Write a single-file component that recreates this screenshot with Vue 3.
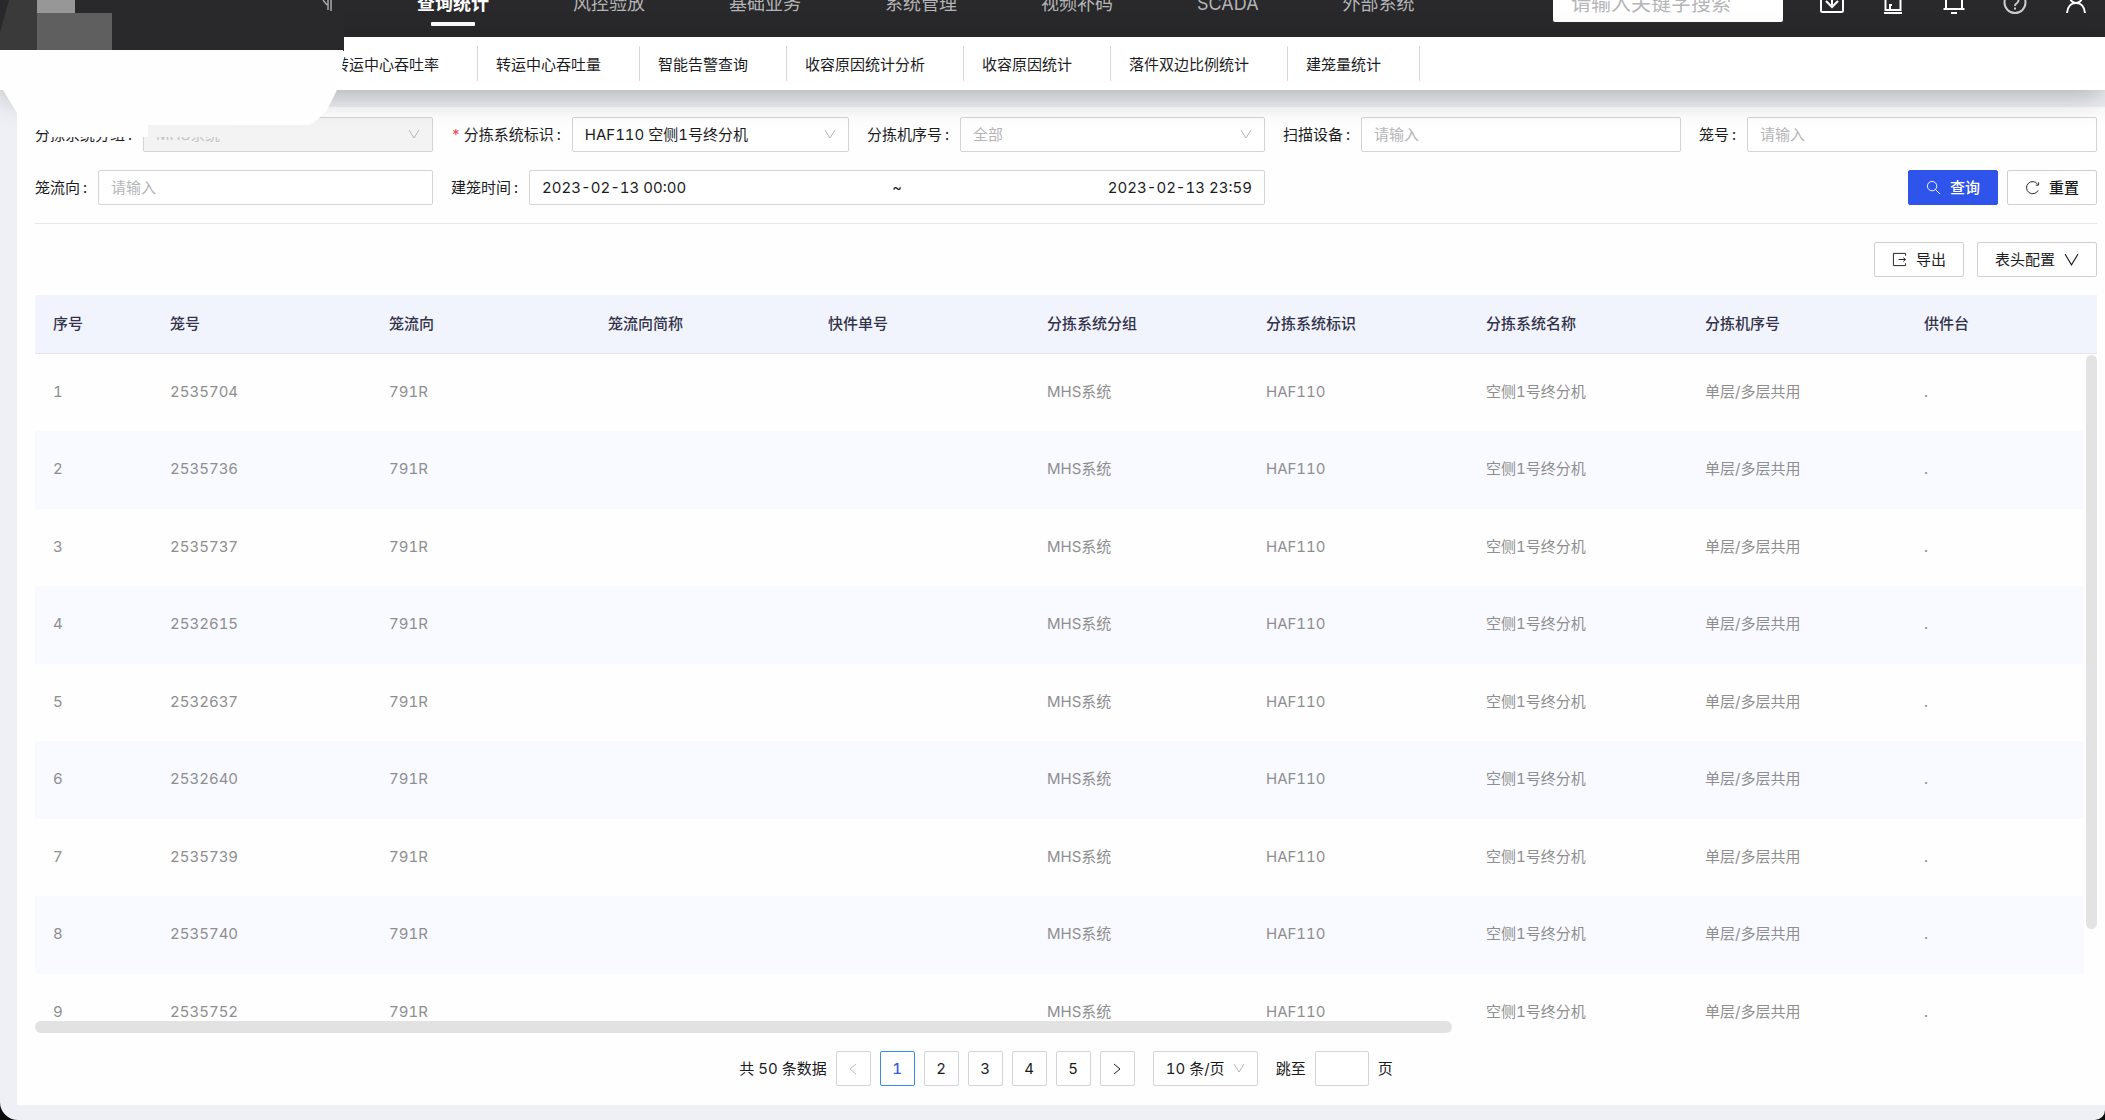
<script setup>
import { ref } from 'vue'

const mainNav = ['查询统计', '风控验放', '基础业务', '系统管理', '视频补码', 'SCADA', '外部系统']
const subNav = ['转运中心吞吐率', '转运中心吞吐量', '智能告警查询', '收容原因统计分析', '收容原因统计', '落件双边比例统计', '建笼量统计']
const columns = ['序号', '笼号', '笼流向', '笼流向简称', '快件单号', '分拣系统分组', '分拣系统标识', '分拣系统名称', '分拣机序号', '供件台']
const cages = ['2535704', '2535736', '2535737', '2532615', '2532637', '2532640', '2535739', '2535740', '2535752']
const rows = cages.map((no, i) => [i + 1, no, '791R', '', '', 'MHS系统', 'HAF110', '空侧1号终分机', '单层/多层共用', '.'])

const current = ref(1)
const startTime = ref('2023-02-13 00:00')
const endTime = ref('2023-02-13 23:59')
</script>

<template>
  <div class="layout">
    <header class="topbar">
      <nav class="main-nav">
        <a v-for="(item, i) in mainNav" :key="item" href="#" :class="{ active: i === 0 }">{{ item }}</a>
      </nav>
      <div class="tools">
        <input class="search" type="search" placeholder="请输入关键字搜索" aria-label="搜索" />
        <button type="button" class="tool" aria-label="下载">
          <svg viewBox="0 0 24 24"><rect x="1" y="0" width="22" height="20" rx="1.5" /><path d="M12 2v11M6 9l6 6 6-6" /></svg>
        </button>
        <button type="button" class="tool" aria-label="告警">
          <svg viewBox="0 0 24 24"><path d="M4.500 18V9a7.500 7.500 0 0 1 15 0v9zM9 18v-5h2M3 21h18" /></svg>
        </button>
        <button type="button" class="tool" aria-label="通知">
          <svg viewBox="0 0 24 24"><path d="M4 17V9a8 8 0 0 1 16 0v8M1.500 17h21M9 21h6" /></svg>
        </button>
        <button type="button" class="tool dim" aria-label="帮助">
          <svg viewBox="0 0 24 24"><circle cx="12" cy="10.500" r="10.500" /><path d="M8.500 8a3.500 3.500 0 1 1 5.500 3c-1.300.9-2 1.500-2 3M12 15.500v2" /></svg>
        </button>
        <button type="button" class="tool" aria-label="用户">
          <svg viewBox="0 0 24 24"><circle cx="12" cy="5" r="6" /><path d="M3 21c.5-6 4-10 9-10s8.500 4 9 10" /></svg>
        </button>
      </div>
    </header>

    <nav class="sub-nav">
      <a v-for="item in subNav" :key="item" href="#"><span>{{ item }}</span></a>
    </nav>

    <main class="panel">
      <form class="filters" @submit.prevent>
        <div class="field">
          <label for="group">分拣系统分组</label>
          <div class="select">
            <select id="group" disabled><option>MHS系统</option></select>
            <svg viewBox="0 0 12 12"><path d="M1 2l5 8 5-8" /></svg>
          </div>
        </div>
        <div class="field">
          <label for="sys" class="required">分拣系统标识</label>
          <div class="select">
            <select id="sys"><option>HAF110 空侧1号终分机</option></select>
            <svg viewBox="0 0 12 12"><path d="M1 2l5 8 5-8" /></svg>
          </div>
        </div>
        <div class="field">
          <label for="machine">分拣机序号</label>
          <div class="select">
            <select id="machine" class="empty"><option>全部</option></select>
            <svg viewBox="0 0 12 12"><path d="M1 2l5 8 5-8" /></svg>
          </div>
        </div>
        <div class="field">
          <label for="scanner">扫描设备</label>
          <input id="scanner" class="text" type="text" placeholder="请输入" />
        </div>
        <div class="field">
          <label for="cage">笼号</label>
          <input id="cage" class="text" type="text" placeholder="请输入" />
        </div>
        <div class="field">
          <label for="flow">笼流向</label>
          <input id="flow" class="text" type="text" placeholder="请输入" />
        </div>
        <div class="field wide">
          <label for="start">建笼时间</label>
          <div class="range">
            <input id="start" v-model="startTime" type="text" />
            <span>~</span>
            <input v-model="endTime" class="end" type="text" aria-label="结束时间" />
          </div>
        </div>
        <div class="actions">
          <button type="submit" class="btn primary">
            <svg viewBox="0 0 16 16"><circle cx="6.500" cy="6.500" r="5" /><path d="M10 10l5 5" /></svg>
            <span>查询</span>
          </button>
          <button type="reset" class="btn">
            <svg viewBox="0 0 16 16"><path d="M13.500 4.500A6.500 6.500 0 1 0 14 11M14.500 2.500v3h-3" /></svg>
            <span>重置</span>
          </button>
        </div>
      </form>

      <div class="toolbar">
        <button type="button" class="btn">
          <svg viewBox="0 0 16 16"><path d="M14.500 4V1.500h-13v13h13V12M7 8h7M12 6l2.500 2L12 10" /></svg>
          <span>导出</span>
        </button>
        <button type="button" class="btn">
          <span>表头配置</span>
          <svg class="caret" viewBox="0 0 14 14"><path d="M1 2l6 10 6-10" /></svg>
        </button>
      </div>

      <div class="table-box">
        <div class="viewport">
          <table>
            <colgroup>
              <col class="c-index" />
              <col v-for="n in 8" :key="n" :class="n === 3 || n === 6 ? 'c-wide' : 'c-std'" />
              <col />
            </colgroup>
            <thead>
              <tr><th v-for="c in columns" :key="c" scope="col">{{ c }}</th></tr>
            </thead>
            <tbody>
              <tr v-for="row in rows" :key="row[0]">
                <td v-for="(cell, i) in row" :key="i">{{ cell }}</td>
              </tr>
            </tbody>
          </table>
        </div>
        <div class="v-track"><div class="v-thumb"></div></div>
        <div class="h-thumb"></div>
      </div>

      <div class="pager">
        <span class="total">共 50 条数据</span>
        <button type="button" class="page off" disabled aria-label="上一页">
          <svg viewBox="0 0 12 12"><path d="M9 1L3 6l6 5" /></svg>
        </button>
        <button v-for="n in 5" :key="n" type="button" class="page" :class="{ on: n === current }" @click="current = n">{{ n }}</button>
        <button type="button" class="page" aria-label="下一页">
          <svg viewBox="0 0 12 12"><path d="M3 1l6 5-6 5" /></svg>
        </button>
        <div class="select size">
          <select aria-label="每页条数"><option>10 条/页</option></select>
          <svg viewBox="0 0 12 12"><path d="M1 2l5 8 5-8" /></svg>
        </div>
        <label class="jump" for="jump">跳至</label>
        <input id="jump" class="jump-input" type="text" />
        <span class="unit">页</span>
      </div>
    </main>

    <svg class="mask" width="344" height="145" viewBox="0 0 344 145" aria-hidden="true">
      <rect width="344" height="51" fill="#29292b" />
      <rect width="37" height="51" fill="#3a3a3b" />
      <path d="M0 0h9L0 32z" fill="#29292b" />
      <rect x="37" width="75" height="50" fill="#5f5f5f" />
      <rect x="75" width="37" height="13" fill="#29292b" />
      <rect x="37" width="38" height="13" fill="#979797" />
      <path d="M323 0l4 5M328 0v10M331 0v11" stroke="#aaa" stroke-width="1.500" fill="none" />
      <path d="M150 124h80v13h-80z" fill="#f3f3f3" />
      <path d="M0 50h343l1 8-7 32-10 20-10 10-7 5H148v12H50l-2-7H17V113L3 90 0 84z" fill="#fefefe" />
    </svg>
  </div>
</template>

<style>
html,
body {
  margin: 0;
  background: #0c0c0d;
  overflow: hidden;
}
</style>

<style scoped>
.layout,
.layout * {
  box-sizing: border-box;
}
.layout {
  position: relative;
  display: flex;
  flex-direction: column;
  height: 100vh;
  overflow: hidden;
  background: #eff0f5;
  border-radius: 0 0 10px 18px;
  font-family: Inter, "Noto Sans CJK SC", sans-serif;
  font-size: 15px;
  font-variant-numeric: tabular-nums;
  line-height: 22px;
  color: #1c1c1e;
}
button,
input,
select {
  font: inherit;
  font-variant-numeric: inherit;
  color: inherit;
  margin: 0;
  outline: none;
}
a {
  color: inherit;
  text-decoration: none;
}
svg {
  fill: none;
  stroke: currentColor;
}
.topbar {
  flex: none;
  display: flex;
  justify-content: space-between;
  align-items: center;
  height: 67px;
  margin-top: -30px;
  padding: 0 17px 0 417px;
  background: #29292b;
}
.main-nav {
  display: flex;
  gap: 84px;
  height: 67px;
  font-size: 18px;
  line-height: 68px;
  color: #b4b4b6;
}
.main-nav a {
  position: relative;
  white-space: nowrap;
}
.main-nav .active {
  color: #fff;
  font-weight: 700;
}
.main-nav .active::after {
  content: "";
  position: absolute;
  left: 14px;
  right: 14px;
  bottom: 11px;
  height: 4px;
  border-radius: 1px;
  background: #fff;
}
.tools {
  display: flex;
  align-items: center;
  gap: 37px;
}
.search {
  width: 230px;
  height: 36px;
  padding: 0 18px;
  border: 0;
  border-radius: 2px;
  background: #fff;
  font-size: 20px;
}
.tool {
  width: 24px;
  height: 24px;
  padding: 0;
  border: 0;
  background: none;
  color: #fff;
}
.tool.dim {
  color: #ccc;
}
.tool svg {
  display: block;
  width: 24px;
  height: 24px;
  overflow: visible;
  stroke-width: 2;
}
::placeholder {
  color: #b5b5b8;
  opacity: 1;
}
.sub-nav {
  flex: none;
  position: relative;
  z-index: 1;
  display: flex;
  align-items: center;
  height: 53px;
  padding-left: 316px;
  background: #fff;
  box-shadow: 0 6px 30px rgba(0, 0, 0, 0.28);
}
.sub-nav a {
  height: 35px;
  padding: 0 38px 0 18px;
  border-right: 1px solid #d6d8dc;
  line-height: 38px;
  white-space: nowrap;
}
.panel {
  flex: 1;
  display: flex;
  flex-direction: column;
  min-height: 0;
  margin: 17px 0 15px 17px;
  padding: 10px 8px 19px 18px;
  background: #fefefe;
}
.filters {
  display: grid;
  grid-template-columns: repeat(5, minmax(0, 1fr));
  gap: 18px;
  padding-bottom: 18px;
  border-bottom: 1px solid #e6e6e8;
}
.field {
  display: flex;
  align-items: center;
}
.field.wide {
  grid-column: span 2;
}
.field label {
  flex: none;
}
.field label::after {
  content: ":";
  margin: 0 11px 0 3px;
}
.field .required::before {
  content: "*";
  margin-right: 3px;
  color: #e5484d;
}
.text,
.range,
.select {
  flex: 1;
  min-width: 0;
  height: 35px;
  border: 1px solid #d4d4d6;
  border-radius: 2px;
  background: #fff;
}
.text {
  padding: 0 12px;
}
.select {
  position: relative;
}
.select select {
  display: block;
  width: 100%;
  height: 100%;
  padding: 0 32px 0 12px;
  border: 0;
  appearance: none;
  background: transparent;
  opacity: 1;
}
.select .empty {
  color: #b5b5b8;
}
.select select:disabled {
  background: #f3f3f3;
  color: #c4c4c4;
}
.select svg {
  position: absolute;
  top: 10px;
  right: 12px;
  width: 12px;
  height: 12px;
  color: #b5b5b8;
  pointer-events: none;
}
.range {
  display: flex;
  align-items: center;
  padding: 0 12px;
}
.range input {
  flex: 1;
  min-width: 0;
  padding: 0;
  border: 0;
  background: none;
}
.range .end {
  text-align: right;
}
.actions {
  grid-column: 5;
  display: flex;
  justify-content: flex-end;
  gap: 9px;
}
.btn {
  display: flex;
  align-items: center;
  gap: 9px;
  height: 35px;
  padding: 0 17px;
  border: 1px solid #d0d0d2;
  border-radius: 2px;
  background: #fff;
}
.btn svg {
  width: 15px;
  height: 15px;
}
.actions .btn {
  font-weight: 500;
}
.btn.primary {
  border-color: #2f54eb;
  background: #2f54eb;
  color: #fff;
}
.toolbar {
  display: flex;
  justify-content: flex-end;
  gap: 13px;
  padding: 18px 0;
}
.table-box {
  flex: 1;
  display: flex;
  position: relative;
  min-height: 0;
  padding-bottom: 12px;
}
.viewport {
  flex: 1;
  overflow: hidden;
}
table {
  width: 100%;
  table-layout: fixed;
  border-collapse: separate;
  border-spacing: 0;
}
.c-index {
  width: 117px;
}
.c-std {
  width: 219px;
}
.c-wide {
  width: 220px;
}
th,
td {
  padding: 0 18px;
  text-align: left;
  white-space: nowrap;
}
th {
  height: 59px;
  border-bottom: 1px solid #e4e5ea;
  background: #f1f3fd;
  color: #33334a;
  font-weight: 500;
}
td {
  height: 77px;
  padding-bottom: 2px;
  color: #8e8e90;
}
tr:nth-child(even) td {
  height: 78px;
  background: #f9faff;
}
.v-track {
  position: absolute;
  top: 59px;
  right: 0;
  bottom: 12px;
  width: 13px;
  padding: 1px 0 92px 2px;
  background: #fefefe;
}
.v-thumb {
  height: 100%;
  border-radius: 6px;
  background: #e3e3e3;
}
.h-thumb {
  position: absolute;
  left: 0;
  bottom: 0;
  width: calc(69% - 6px);
  height: 12px;
  border-radius: 6px;
  background: #e2e2e2;
}
.pager {
  display: flex;
  justify-content: center;
  align-items: center;
  gap: 9px;
  margin-top: 18px;
}
.page {
  display: flex;
  align-items: center;
  justify-content: center;
  width: 35px;
  height: 35px;
  padding: 0;
  border: 1px solid #d4d4d6;
  border-radius: 2px;
  background: #fff;
}
.page svg {
  width: 12px;
  height: 12px;
}
.page.off {
  color: #c0c0c0;
}
.page.on {
  border-color: #3b8be6;
  color: #3b5be6;
  font-weight: 500;
}
.size {
  flex: none;
  width: 105px;
  margin: 0 9px;
}
.size select {
  padding-right: 24px;
}
.jump-input {
  width: 54px;
  height: 35px;
  border: 1px solid #d4d4d6;
  border-radius: 2px;
  background: #fff;
}
.mask {
  position: absolute;
  z-index: 2;
  top: 0;
  left: 0;
  stroke: none;
  pointer-events: none;
}
</style>
